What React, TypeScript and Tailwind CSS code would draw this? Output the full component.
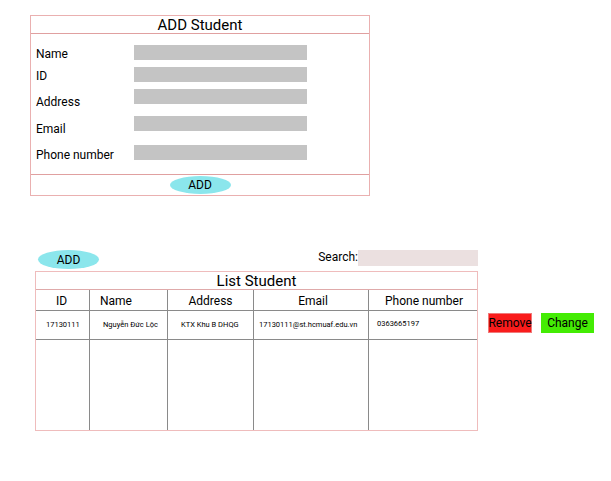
import React from "react";

const font = { fontFamily: "Roboto, 'Noto Sans', sans-serif" };

function FormRow({ label, mt, pt }: { label: string; mt: string; pt: string }) {
  return (
    <div className={`flex items-start h-[15px] ${mt}`}>
      <div className={`w-[103px] pl-[5px] text-[12px] leading-[15px] text-black ${pt}`}>{label}</div>
      <div className="h-[15px] w-[173px] bg-[#c4c4c4]" />
    </div>
  );
}

export default function App() {
  const cols = [
    { h: "ID", hAlign: "justify-center pr-[2px]", v: "17130111", vAlign: "pl-[10px]" },
    { h: "Name", hAlign: "justify-start pl-[10px]", v: "Nguyễn Đức Lộc", vAlign: "pl-[13px]" },
    { h: "Address", hAlign: "justify-center", v: "KTX Khu B DHQG", vAlign: "pl-[13px]" },
    { h: "Email", hAlign: "justify-center pl-[4px]", v: "17130111@st.hcmuaf.edu.vn", vAlign: "pl-[5px]" },
    { h: "Phone number", hAlign: "justify-center pl-[2px]", v: "0363665197", vAlign: "pl-[8px] pb-[2px]" },
  ];
  const widths = ["w-[53px]", "w-[78px]", "w-[86px]", "w-[115px]", "w-[109px]"];
  return (
    <div className="w-[611px] h-[481px] bg-white overflow-hidden text-black" style={font}>
      {/* Add Student form */}
      <div className="ml-[30px] mt-[15px] w-[340px] h-[181px] border border-[#eab0b0] flex flex-col">
        <div className="h-[18px] border-b border-[#e0a0a0] flex items-center justify-center text-[15px] leading-[18px]">
          ADD Student
        </div>
        <div className="h-[141px] border-b border-[#e0a0a0] flex flex-col">
          <FormRow label="Name" mt="mt-[11px]" pt="pt-[1.5px]" />
          <FormRow label="ID" mt="mt-[7px]" pt="pt-[1.5px]" />
          <FormRow label="Address" mt="mt-[7px]" pt="pt-[5.5px]" />
          <FormRow label="Email" mt="mt-[12px]" pt="pt-[5.5px]" />
          <FormRow label="Phone number" mt="mt-[14px]" pt="pt-[3px]" />
        </div>
        <div className="flex-1 flex items-center justify-center">
          <div className="w-[61px] h-[18px] rounded-[50%] bg-[#8be6ec] flex items-center justify-center text-[12px] leading-none">
            ADD
          </div>
        </div>
      </div>

      {/* List section */}
      <div className="ml-[35px] mt-[54px] flex flex-col">
        <div className="w-[443px] h-[21px] flex items-start justify-between">
          <div className="ml-[3px] w-[61px] h-[19px] rounded-[50%] bg-[#8be6ec] flex items-center justify-center text-[12px] leading-none">
            ADD
          </div>
          <div className="flex items-start">
            <span className="text-[12px] leading-[15px]">Search:</span>
            <div className="w-[120px] h-[16px] bg-[#ebe0e0]" />
          </div>
        </div>
        <div className="flex items-start">
          <div className="w-[443px] h-[160px] border border-[#efbcbc] flex flex-col">
            <div className="h-[18px] border-b border-[#dfaaaa] flex items-center justify-center text-[15px] leading-[18px]">
              List Student
            </div>
            <div className="flex flex-1">
              {cols.map((c, i) => (
                <div
                  key={c.h}
                  className={`${widths[i]} ${i > 0 ? "border-l border-[#8a8a8a]" : ""} flex flex-col shrink-0`}
                >
                  <div className={`h-[21px] border-b border-[#8a8a8a] flex items-center pt-[2px] text-[12px] leading-none ${c.hAlign}`}>
                    {c.h}
                  </div>
                  <div className={`h-[29px] border-b border-[#8a8a8a] flex items-center text-[7.5px] leading-none ${c.vAlign}`}>
                    {c.v}
                  </div>
                  <div className="flex-1" />
                </div>
              ))}
            </div>
          </div>
          <div className="ml-[10px] mt-[42px] flex gap-[9px]">
            <div className="w-[44px] h-[20px] bg-[#f91c1c] border border-[#f07a7a] flex items-center justify-center text-[12px] leading-none">
              Remove
            </div>
            <div className="w-[53px] h-[20px] bg-[#44ec04] flex items-center justify-center text-[12px] leading-none">
              Change
            </div>
          </div>
        </div>
      </div>
    </div>
  );
}
